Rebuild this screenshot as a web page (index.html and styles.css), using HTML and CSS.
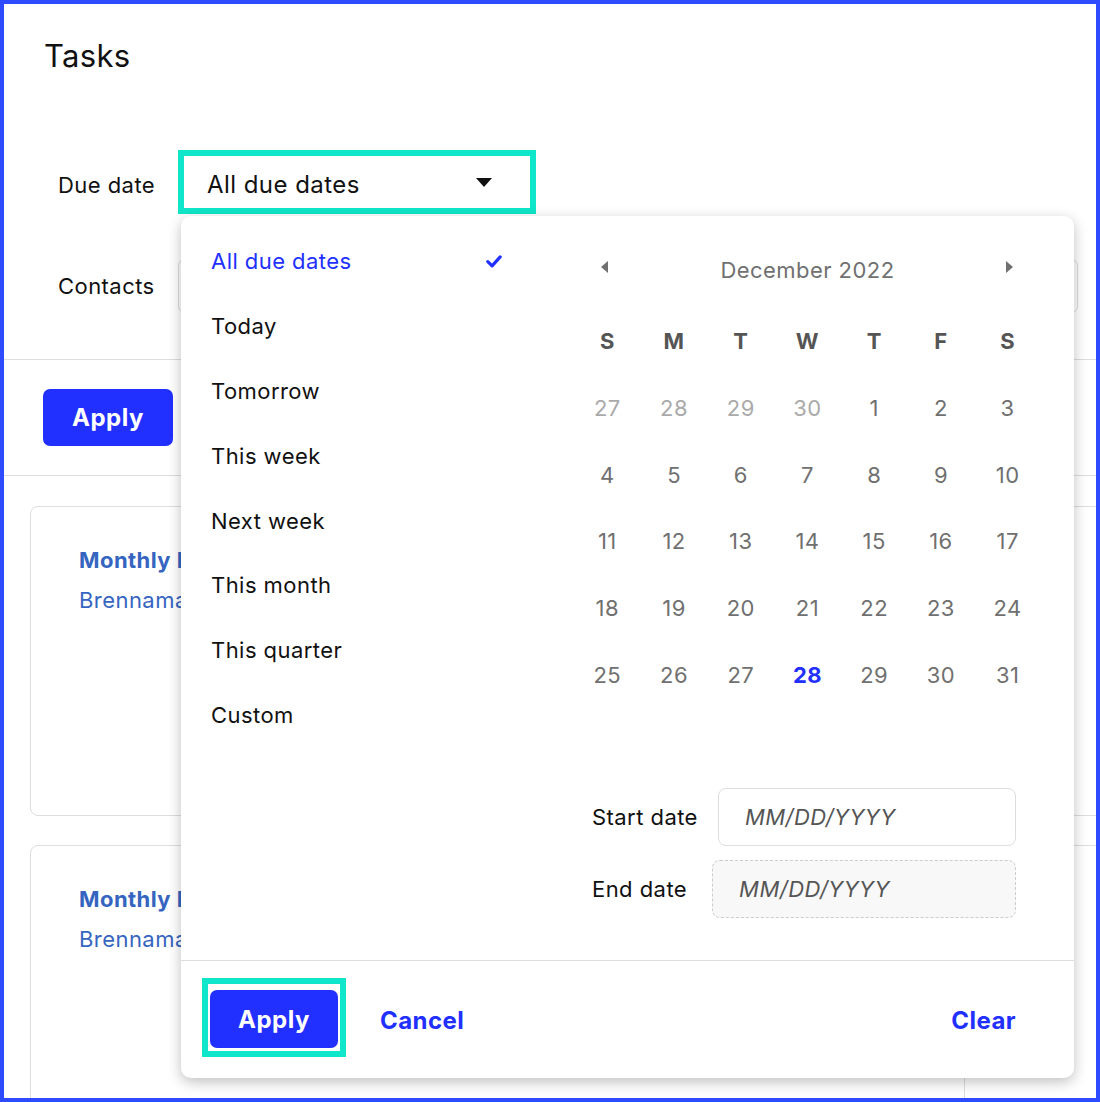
FILE: index.html
```html
<!DOCTYPE html>
<html lang="en">
<head>
    <meta charset="UTF-8">
    <meta name="viewport" content="width=device-width, initial-scale=1.0">
    <title>Tasks</title>
    <link rel="stylesheet" href="styles.css">
</head>
<body>

<div class="frame">

    <h1 class="page-title">Tasks</h1>

    <div class="filters">
        <div class="filter-row">
            <span class="filter-label due">Due date</span>
            <div class="select highlight">
                <span class="select-value">All due dates</span>
                <svg class="caret" width="16" height="9" viewBox="0 0 16 9"><path d="M0 0h16L8 9z" fill="#111"/></svg>
            </div>
        </div>
        <div class="filter-row contacts-row">
            <span class="filter-label">Contacts</span>
            <div class="text-input"></div>
        </div>
    </div>

    <div class="apply-bar">
        <button class="btn-primary">Apply</button>
    </div>

    <div class="cards">
        <div class="card">
            <div class="card-main">
                <a class="card-title">Monthly Invoice review</a>
                <span class="card-contact">Brennamarie Holt</span>
            </div>
            <div class="card-side"></div>
        </div>
        <div class="card">
            <div class="card-main">
                <a class="card-title">Monthly Invoice review</a>
                <span class="card-contact">Brennamarie Holt</span>
            </div>
            <div class="card-side"></div>
        </div>
    </div>

    <!-- due date dropdown -->
    <div class="popup">
        <div class="popup-body">
            <ul class="range-list">
                <li class="selected">All due dates
                    <svg width="16" height="13" viewBox="0 0 16 13"><path d="M1.8 6.6l4.3 4.2L14.2 1.9" fill="none" stroke="#2130ff" stroke-width="3.2" stroke-linecap="round" stroke-linejoin="round"/></svg>
                </li>
                <li>Today</li>
                <li>Tomorrow</li>
                <li>This week</li>
                <li>Next week</li>
                <li>This month</li>
                <li>This quarter</li>
                <li>Custom</li>
            </ul>

            <div class="calendar">
                <div class="cal-header">
                    <svg class="cal-arrow prev" width="7" height="12" viewBox="0 0 7 12"><path d="M7 0v12L0 6z" fill="#707070"/></svg>
                    <span class="cal-month">December 2022</span>
                    <svg class="cal-arrow next" width="7" height="12" viewBox="0 0 7 12"><path d="M0 0v12l7-6z" fill="#707070"/></svg>
                </div>
                <div class="cal-grid">
                    <span class="wd">S</span><span class="wd">M</span><span class="wd">T</span><span class="wd">W</span><span class="wd">T</span><span class="wd">F</span><span class="wd">S</span>
                    <span class="muted">27</span><span class="muted">28</span><span class="muted">29</span><span class="muted">30</span><span>1</span><span>2</span><span>3</span>
                    <span>4</span><span>5</span><span>6</span><span>7</span><span>8</span><span>9</span><span>10</span>
                    <span>11</span><span>12</span><span>13</span><span>14</span><span>15</span><span>16</span><span>17</span>
                    <span>18</span><span>19</span><span>20</span><span>21</span><span>22</span><span>23</span><span>24</span>
                    <span>25</span><span>26</span><span>27</span><span class="today">28</span><span>29</span><span>30</span><span>31</span>
                </div>

                <div class="date-fields">
                    <div class="date-row">
                        <span class="date-label">Start date</span>
                        <div class="date-input">MM/DD/YYYY</div>
                    </div>
                    <div class="date-row">
                        <span class="date-label">End date</span>
                        <div class="date-input disabled">MM/DD/YYYY</div>
                    </div>
                </div>
            </div>
        </div>

        <div class="popup-footer">
            <div class="highlight apply-wrap">
                <button class="btn-primary">Apply</button>
            </div>
            <a class="link-btn">Cancel</a>
            <a class="link-btn clear">Clear</a>
        </div>
    </div>

</div>

</body>
</html>
```

FILE: styles.css
```css
* {
    box-sizing: border-box;
}

body {
    margin: 0;
    font-family: Inter, "Noto Sans", sans-serif;
    letter-spacing: 0.028em;
    color: #111;
    background: #fff;
}

.frame {
    position: relative;
    width: 1100px;
    height: 1102px;
    border: 4px solid #2f4bff;
    overflow: hidden;
}

.page-title {
    margin: 0;
    padding: 32px 0 0 40px;
    font-size: 31px;
    font-weight: 400;
    line-height: 40px;
    letter-spacing: 0.01em;
}

/* teal focus marker around the highlighted controls */
.highlight {
    border: 6px solid #10e6c9;
}

.filters {
    padding: 74px 0 45px 54px;
    border-bottom: 1px solid #ddd;
}

.filter-row {
    display: flex;
    align-items: center;
}

.contacts-row {
    margin-top: 44px;
}

.filter-label {
    width: 120px;
    font-size: 22px;
}

.filter-label.due {
    padding-top: 5px;
}

.select {
    width: 358px;
    height: 64px;
    display: flex;
    align-items: center;
    justify-content: space-between;
    padding: 0 38px 0 23px;
    font-size: 24px;
    background: #fff;
}

.select-value {
    padding-top: 5px;
}

.text-input {
    width: 900px;
    height: 56px;
    border: 1px solid #ddd;
    border-radius: 8px;
}

.apply-bar {
    padding: 29px 0 29px 39px;
    border-bottom: 1px solid #ddd;
}

.btn-primary {
    width: 130px;
    height: 57px;
    border: none;
    border-radius: 7px;
    background: #2130ff;
    color: #fff;
    font-family: inherit;
    font-size: 24px;
    font-weight: 700;
    letter-spacing: 0.02em;
}

.cards {
    padding: 30px 0 0 26px;
}

.card {
    display: flex;
    width: 1120px;
    height: 310px;
    margin-bottom: 29px;
    border: 1px solid #ddd;
    border-radius: 8px;
}

.card-main {
    width: 933px;
    padding: 40px 0 0 48px;
    display: flex;
    flex-direction: column;
    color: #3565c0;
    white-space: nowrap;
}

.card-title {
    font-size: 22px;
    font-weight: 700;
}

.card-contact {
    margin-top: 14px;
    font-size: 22px;
}

.card-side {
    flex: 1;
    border-left: 1px solid #ddd;
}

/* dropdown */
.popup {
    position: absolute;
    left: 177px;
    top: 212px;
    width: 893px;
    height: 862px;
    background: #fff;
    border-radius: 10px;
    box-shadow: 0 4px 14px rgba(0, 0, 0, 0.25);
    display: flex;
    flex-direction: column;
}

.popup-body {
    display: flex;
    height: 745px;
    border-bottom: 1px solid #ddd;
}

.range-list {
    list-style: none;
    margin: 0;
    padding: 13px 0 0 0;
    width: 350px;
}

.range-list li {
    height: 64.8px;
    display: flex;
    align-items: center;
    justify-content: space-between;
    padding: 0 29px 0 30px;
    font-size: 22px;
}

.range-list li.selected {
    color: #2130ff;
}

.calendar {
    margin-left: 43px;
    width: 467px;
    padding-top: 17px;
}

.cal-header {
    display: grid;
    grid-template-columns: repeat(7, 1fr);
    height: 68px;
    align-items: center;
    justify-items: center;
    margin-bottom: 7px;
}

.cal-arrow.prev {
    margin-right: 6px;
}

.cal-arrow.next {
    margin-left: 4px;
}

.cal-month {
    grid-column: 2 / 7;
    padding-top: 5px;
    font-size: 22px;
    color: #707070;
}

.cal-grid {
    display: grid;
    grid-template-columns: repeat(7, 1fr);
    grid-auto-rows: 66.67px;
    align-items: center;
    justify-items: center;
    font-size: 22px;
    color: #707070;
}

.cal-grid .wd {
    font-weight: 700;
    color: #555;
}

.cal-grid .muted {
    color: #aaa;
}

.cal-grid .today {
    color: #2130ff;
    font-weight: 700;
}

.date-fields {
    padding: 80px 25px 0 18px;
}

.date-row {
    display: flex;
    align-items: center;
    gap: 20px;
    margin-bottom: 14px;
}

.date-label {
    font-size: 22px;
    white-space: nowrap;
}

.date-input {
    flex: 1;
    height: 58px;
    display: flex;
    align-items: center;
    padding-left: 26px;
    border: 1px solid #ddd;
    border-radius: 8px;
    font-size: 22px;
    font-style: italic;
    color: #555;
}

.date-input.disabled {
    margin-left: 5px;
    border: 1px dashed #ccc;
    background: #f8f8f8;
}

.popup-footer {
    display: flex;
    align-items: center;
    padding: 17px 58px 0 21px;
}

.apply-wrap {
    padding: 6px 2px 3px 2px;
}

.apply-wrap .btn-primary {
    width: 128px;
    height: 58px;
    display: block;
}

.link-btn {
    margin-left: 34px;
    padding-top: 5px;
    font-size: 24px;
    font-weight: 700;
    color: #2130ff;
}

.link-btn.clear {
    margin-left: auto;
}
```
